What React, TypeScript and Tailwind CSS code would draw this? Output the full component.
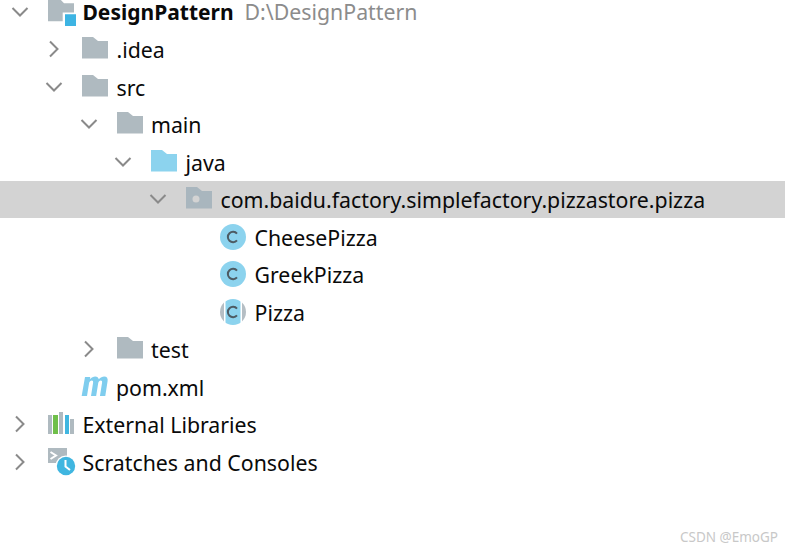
import React from 'react';

const FONT = "font-['Noto_Sans','Open_Sans',sans-serif]";

function Chevron({ open }: { open: boolean }) {
    return (
        <svg width="18" height="18" viewBox="0 0 18 18" fill="none" stroke="#8a8a8a" strokeWidth="2">
            {open ? <path d="M1.5 5 9 12.5 16.5 5" /> : <path d="M5 1.5 12.5 9 5 16.5" />}
        </svg>
    );
}

function Folder({ color = '#afbac0' }: { color?: string }) {
    return (
        <svg className="-translate-y-px" width="26" height="22" viewBox="0 0 26 22">
            <path d="M0 0H11L16 4H26V21.5H0Z" fill={color} />
        </svg>
    );
}

function PackageFolder() {
    return (
        <svg className="-translate-y-px" width="26" height="22" viewBox="0 0 26 22">
            <path d="M0 0H11L16 4H26V21.5H0Z" fill="#a9b6be" />
            <circle cx="10" cy="12" r="3.5" fill="#d3d3d3" />
        </svg>
    );
}

function RootIcon() {
    return (
        <svg width="28" height="28" viewBox="0 0 28 28">
            <path d="M0 0H11L16 5.25H26V14.5H14.7V23.25H0Z" fill="#afbac0" />
            <rect x="17" y="16.25" width="11" height="11.75" fill="#3db4e3" />
        </svg>
    );
}

function ClassIcon({ abstract }: { abstract?: boolean }) {
    return (
        <svg width="26" height="26" viewBox="0 0 26 26">
            {abstract ? (
                <>
                    <clipPath id="abstract-class-clip">
                        <circle cx="13" cy="13" r="13" />
                    </clipPath>
                    <circle cx="13" cy="13" r="13" fill="#b5bec4" />
                    <rect x="4" y="0" width="18" height="26" fill="#fff" />
                    <rect x="5.5" y="0" width="15" height="26" fill="#8cd3ee" clipPath="url(#abstract-class-clip)" />
                </>
            ) : (
                <circle cx="13" cy="13" r="13" fill="#8cd3ee" />
            )}
            <path d="M17 9.6A5.2 5.2 0 1 0 17 16.4" fill="none" stroke="#4d5b63" strokeWidth="2" />
        </svg>
    );
}

function MavenIcon() {
    return (
        <svg className="-ml-[1px] -translate-y-px" width="28" height="20" viewBox="0 0 28 21" fill="#7fcdee">
            <path d="M3.5 1H9L8.6 3.4C10.4 1.2 12.4 .4 14.2 .4 16.4 .4 17.6 1.5 18 3.4 19.8 1.2 21.8 .4 23.6 .4 26.6 .4 27.8 2.4 27.2 5.6L24.8 21H19.2L21.4 7C21.7 5.4 21.2 4.6 20 4.6 18.8 4.6 17.8 5.5 17.4 7.4L15.2 21H9.8L12 7C12.2 5.4 11.8 4.6 10.6 4.6 9.4 4.6 8.2 5.6 7.8 7.4L5.6 21H0Z" />
        </svg>
    );
}

function LibrariesIcon() {
    return (
        <svg width="26" height="24" viewBox="0 0 26 24">
            <rect x="0" y="3" width="4" height="19" fill="#afbac0" />
            <rect x="5" y="3" width="5" height="19" fill="#6fbf4a" />
            <rect x="11" y="0" width="4" height="22" fill="#afbac0" />
            <rect x="17" y="3" width="4" height="19" fill="#40b6e0" />
            <rect x="22" y="7" width="4" height="15" fill="#afbac0" />
        </svg>
    );
}

function ScratchesIcon() {
    return (
        <svg width="30" height="28" viewBox="0 0 30 28">
            <rect x="0" y="0" width="19" height="15" fill="#afbac0" />
            <path d="M2.5 4 8 7.5 2.5 11" fill="none" stroke="#fff" strokeWidth="2" />
            <circle cx="18" cy="18" r="10.5" fill="#fff" />
            <circle cx="18" cy="18" r="9.2" fill="#40b6e0" />
            <path d="M17.5 12V18.5L22 22" fill="none" stroke="#fff" strokeWidth="2" />
        </svg>
    );
}

interface TreeRowProps {
    indent: string;
    open?: boolean;
    icon: React.ReactNode;
    selected?: boolean;
    children: React.ReactNode;
}

function TreeRow({ indent, open, icon, selected, children }: TreeRowProps) {
    return (
        <div className={`flex items-center h-[37.5px] ${indent} ${selected ? 'bg-[#d3d3d3]' : ''}`}>
            <div className="w-[48px] shrink-0 pl-[11px]">
                {open !== undefined && <Chevron open={open} />}
            </div>
            <div className="w-[34.5px] shrink-0 flex items-center">{icon}</div>
            <div className="whitespace-nowrap pt-[1px]">{children}</div>
        </div>
    );
}

export default function App() {
    return (
        <div className={`w-[785px] h-[550px] overflow-hidden bg-white text-[#0a0a0a] text-[21.3px] leading-none relative ${FONT}`}>
            <div className="-mt-[7px]">
                <TreeRow indent="pl-0" open={true} icon={<RootIcon />}>
                    <span className="inline-block font-bold text-[21px]">DesignPattern</span>
                    <span className="inline-block text-[#8c8c8c] ml-[11px]">D:\DesignPattern</span>
                </TreeRow>
                <TreeRow indent="pl-[34px]" open={false} icon={<Folder />}>.idea</TreeRow>
                <TreeRow indent="pl-[34px]" open={true} icon={<Folder />}>src</TreeRow>
                <TreeRow indent="pl-[68.5px]" open={true} icon={<Folder />}>main</TreeRow>
                <TreeRow indent="pl-[103px]" open={true} icon={<Folder color="#8cd3ee" />}>java</TreeRow>
                <TreeRow indent="pl-[138px]" open={true} selected icon={<PackageFolder />}>
                    com.baidu.factory.simplefactory.pizzastore.pizza
                </TreeRow>
                <TreeRow indent="pl-[172px]" icon={<ClassIcon />}>CheesePizza</TreeRow>
                <TreeRow indent="pl-[172px]" icon={<ClassIcon />}>GreekPizza</TreeRow>
                <TreeRow indent="pl-[172px]" icon={<ClassIcon abstract />}>Pizza</TreeRow>
                <TreeRow indent="pl-[68.5px]" open={false} icon={<Folder />}>test</TreeRow>
                <TreeRow indent="pl-[33.5px]" icon={<MavenIcon />}>pom.xml</TreeRow>
                <TreeRow indent="pl-0" open={false} icon={<LibrariesIcon />}>External Libraries</TreeRow>
                <TreeRow indent="pl-0" open={false} icon={<ScratchesIcon />}>Scratches and Consoles</TreeRow>
            </div>
            <div className="absolute right-[7px] bottom-[6px] text-[13.5px] text-[#c8c8c8]">CSDN @EmoGP</div>
        </div>
    );
}
